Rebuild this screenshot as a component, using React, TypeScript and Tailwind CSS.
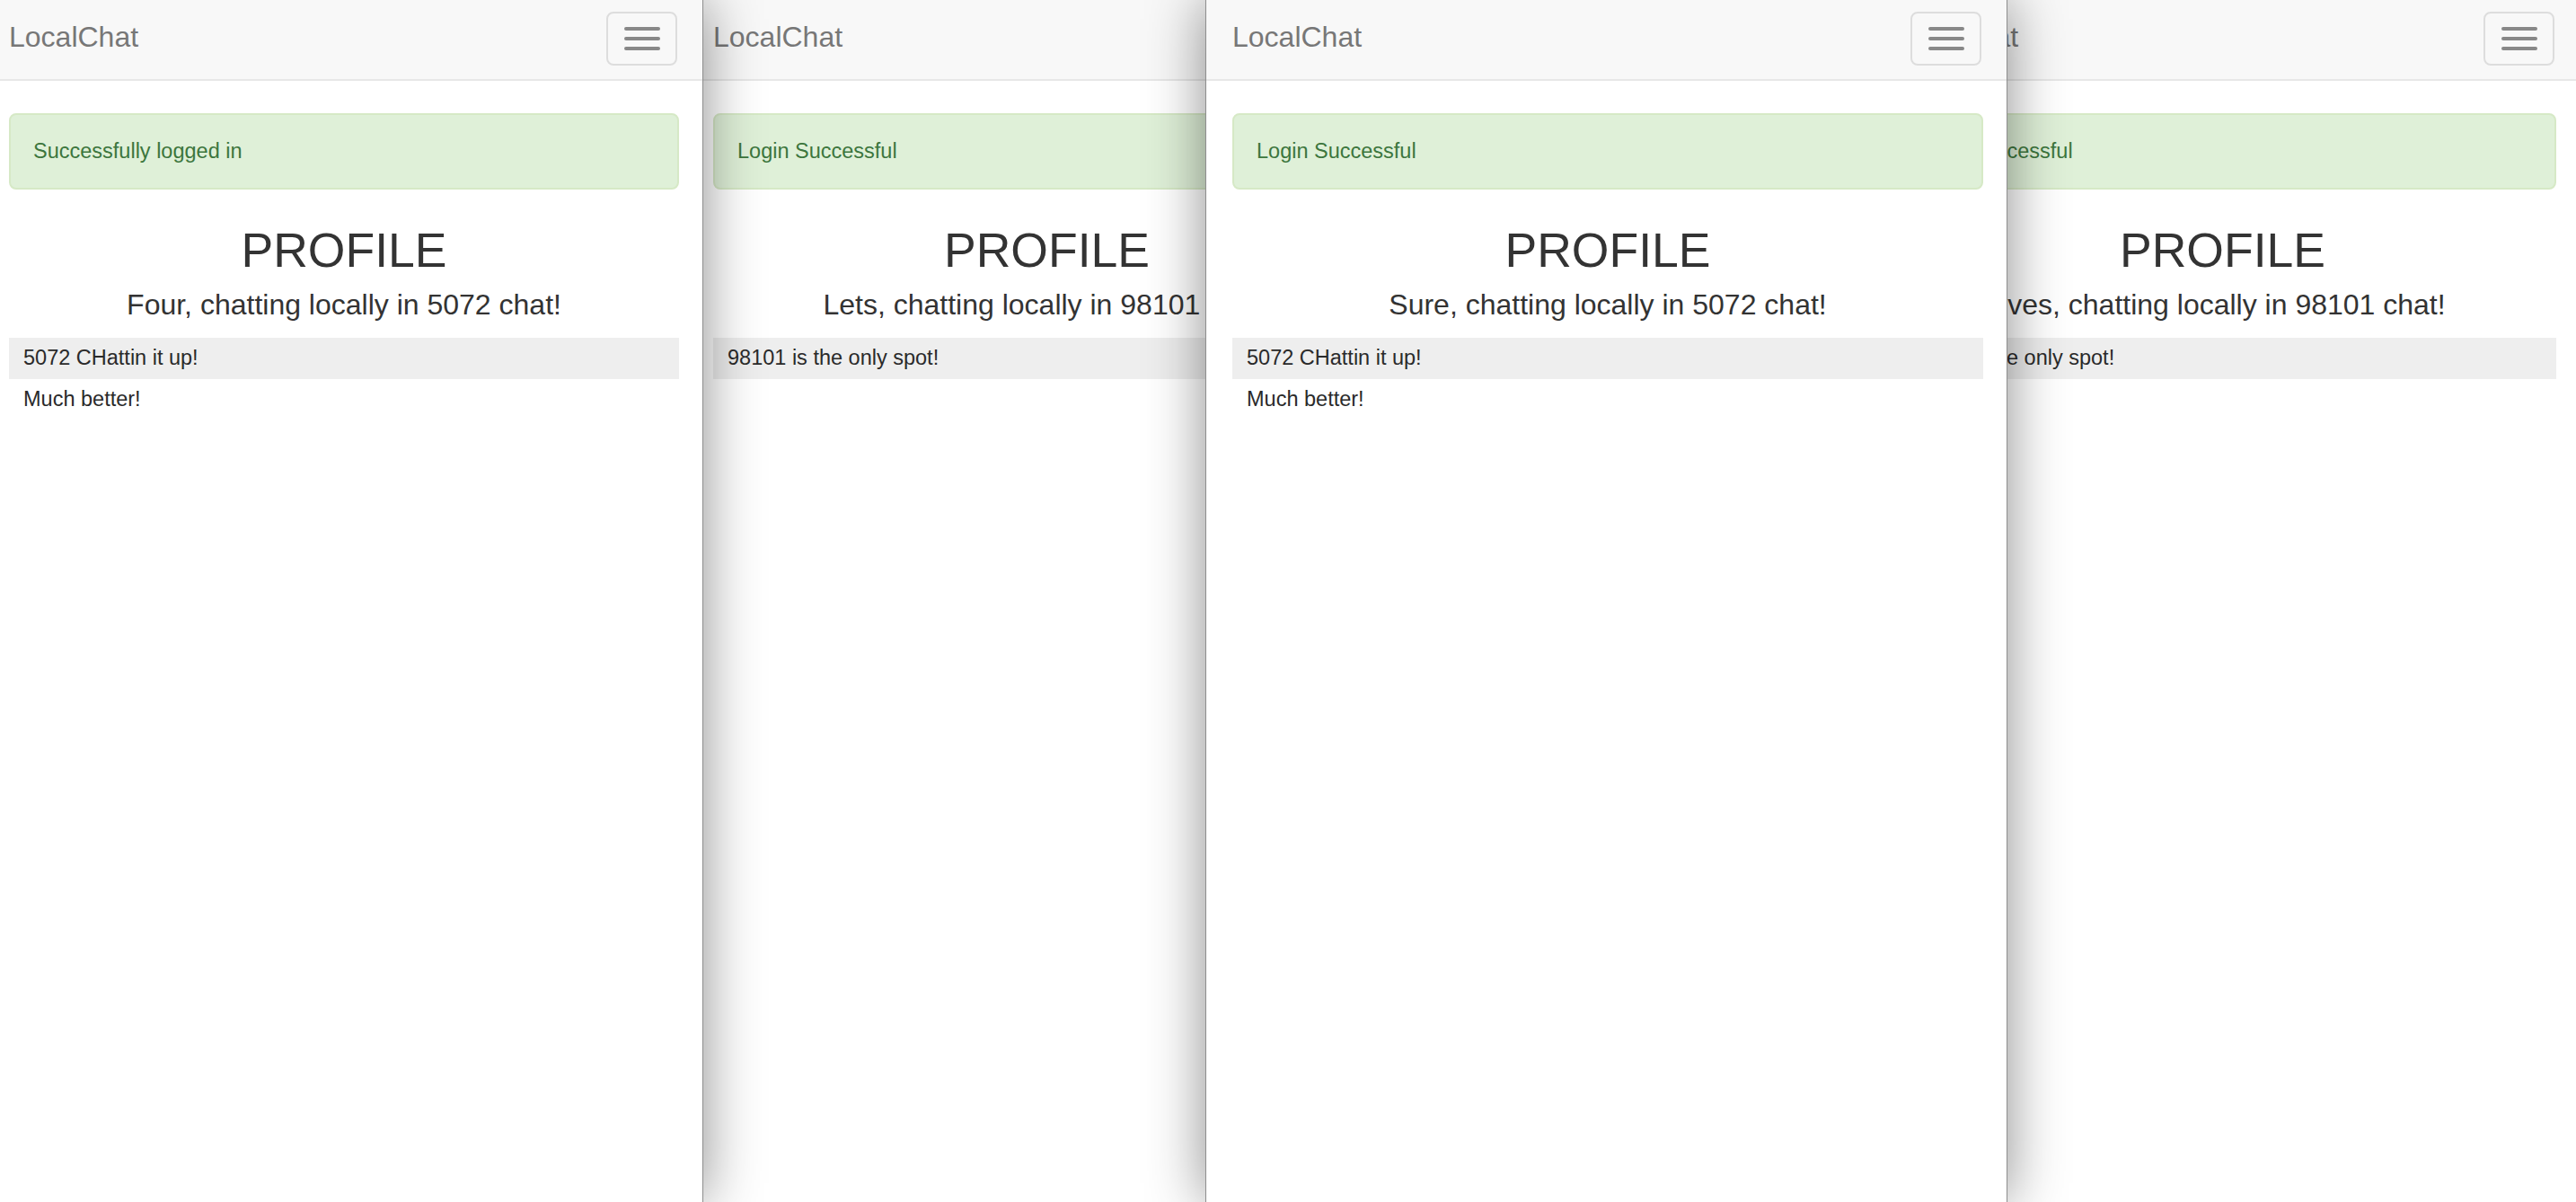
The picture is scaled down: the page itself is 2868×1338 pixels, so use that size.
import React from "react";

type Msg = { text: string };

type WindowProps = {
  className: string;
  alert: string;
  subtitle: string;
  messages: Msg[];
};

// Collapsed navbar toggle with three bars
function MenuButton() {
  return (
    <button className="mt-[13px] w-[79px] h-[60px] border-2 border-[#dddddd] rounded-[8px] flex flex-col items-center justify-center gap-[7px] bg-transparent">
      <span className="block w-[40px] h-[4px] rounded-full bg-[#888888]" />
      <span className="block w-[40px] h-[4px] rounded-full bg-[#888888]" />
      <span className="block w-[40px] h-[4px] rounded-full bg-[#888888]" />
    </button>
  );
}

function ChatWindow({ className, alert, subtitle, messages }: WindowProps) {
  return (
    <div
      className={`absolute top-0 h-[1338px] bg-white border-x border-[#8e8e8e] overflow-hidden flex flex-col ${className}`}
    >
      {/* Navbar */}
      <header className="h-[90px] shrink-0 bg-[#f8f8f8] border-b-2 border-[#e7e7e7] flex justify-between items-start pl-[29px] pr-[28px]">
        <div className="pt-[25px] text-[32px] leading-[32px] text-[#777777]">LocalChat</div>
        <MenuButton />
      </header>

      {/* Page body */}
      <main className="flex flex-col pl-[29px] pr-[26px]">
        <div className="mt-[36px] h-[85px] border-2 border-[#d6e9c6] bg-[#dff0d8] rounded-[8px] pl-[25px] flex items-center text-[23.5px] text-[#3c763d]">
          {alert}
        </div>

        <h1 className="mt-[38px] text-center text-[53.5px] leading-[60px] font-normal text-[#333333] whitespace-nowrap">
          PROFILE
        </h1>
        <h3 className="mt-[12px] text-center text-[32px] leading-[36px] font-normal text-[#333333] whitespace-nowrap">
          {subtitle}
        </h3>

        <ul className="mt-[19px] flex flex-col">
          {messages.map((m, i) => (
            <li
              key={i}
              className={`h-[46px] leading-[44px] pl-[16px] text-[23.5px] text-[#2a2a2a] whitespace-nowrap ${
                i % 2 === 0 ? "bg-[#eeeeee]" : ""
              }`}
            >
              {m.text}
            </li>
          ))}
        </ul>
      </main>
    </div>
  );
}

export default function App() {
  const chat5072 = [{ text: "5072 CHattin it up!" }, { text: "Much better!" }];
  const chat98101 = [{ text: "98101 is the only spot!" }];

  return (
    <div
      className="relative w-[2868px] h-[1338px] overflow-hidden bg-white"
      style={{ fontFamily: '"Liberation Sans", Arial, Helvetica, sans-serif' }}
    >
      {/* Back windows */}
      <ChatWindow
        className="left-[764px] w-[800px] z-0"
        alert="Login Successful"
        subtitle="Lets, chatting locally in 98101 chat!"
        messages={chat98101}
      />
      <ChatWindow
        className="left-[2073px] w-[800px] z-0"
        alert="Login Successful"
        subtitle="Ives, chatting locally in 98101 chat!"
        messages={chat98101}
      />

      {/* Front windows */}
      <ChatWindow
        className="left-[-20px] w-[803px] z-10 shadow-[0_0_60px_rgba(0,0,0,0.45)]"
        alert="Successfully logged in"
        subtitle="Four, chatting locally in 5072 chat!"
        messages={chat5072}
      />
      <ChatWindow
        className="left-[1342px] w-[893px] z-20 shadow-[0_0_60px_rgba(0,0,0,0.45)]"
        alert="Login Successful"
        subtitle="Sure, chatting locally in 5072 chat!"
        messages={chat5072}
      />
    </div>
  );
}
